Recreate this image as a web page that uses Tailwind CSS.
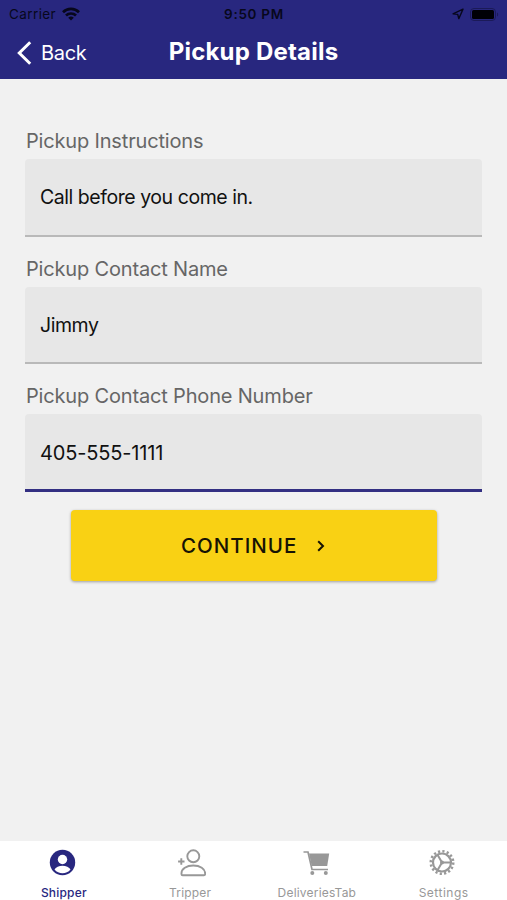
<!DOCTYPE html>
<html lang="en">
<head>
    <meta charset="UTF-8">
    <meta name="viewport" content="width=device-width, initial-scale=1.0">
    <title>Pickup Details</title>
    <script src="https://cdn.jsdelivr.net/npm/@tailwindcss/browser@4"></script>
</head>
<body class="bg-[#f1f1f1] font-['Inter',sans-serif]">
    <div class="flex flex-col w-[507px] h-[900px] overflow-hidden">

        <!-- Header -->
        <header class="h-[79px] bg-[#28277f] shrink-0">
            <div class="h-[27px] grid grid-cols-3 items-center pl-[9px] pr-[8px] text-[#07071c]">
                <div class="flex items-center gap-[6px]">
                    <span class="text-[13.5px] leading-[28px] tracking-[0.4px]">Carrier</span>
                    <svg class="w-[18px] h-[14px]" viewBox="0 0 18 14" fill="none" stroke="currentColor" stroke-width="2.7">
                        <path d="M1 5.2a11.5 11.5 0 0 1 16 0"/>
                        <path d="M4 8.5a7.2 7.2 0 0 1 10 0"/>
                        <path d="M9 13.6L6.2 10.8a4 4 0 0 1 5.6 0z" fill="currentColor" stroke="none"/>
                    </svg>
                </div>
                <span class="text-[13.5px] leading-[28px] font-semibold text-center tracking-[0.7px]">9:50 PM</span>
                <div class="flex items-center justify-end gap-[6px]">
                    <svg class="w-[12px] h-[12px]" viewBox="0 0 12 12" fill="none" stroke="currentColor" stroke-width="1.4" stroke-linejoin="round">
                        <path d="M11 1.200L1 5.800l4.700.6L6.800 10.600z"/>
                    </svg>
                    <svg class="w-[29px] h-[13px]" viewBox="0 0 29 13">
                        <rect x="0.5" y="0.5" width="25" height="12" rx="3.5" fill="none" stroke="#1b1a58"/>
                        <rect x="2" y="2" width="22" height="9" rx="1.5" fill="#000006"/>
                        <path d="M27 4.5c1.6.6 1.6 3.4 0 4z" fill="#1b1a58"/>
                    </svg>
                </div>
            </div>
            <div class="h-[52px] grid grid-cols-[1fr_auto_1fr] items-center text-white">
                <div class="flex items-center gap-[9px] pl-[17px]">
                    <svg class="w-[15px] h-[24px]" viewBox="0 0 15 24" fill="none" stroke="currentColor" stroke-width="3">
                        <path d="M13.2 1.3L2.3 12l10.9 10.7"/>
                    </svg>
                    <span class="text-[20px] leading-[52px] tracking-[-0.3px]">Back</span>
                </div>
                <h1 class="text-[24px] leading-[48px] font-bold pb-[3px] tracking-[0.2px]">Pickup Details</h1>
            </div>
        </header>

        <!-- Pickup form -->
        <main class="flex-1 px-[25px] pt-[47px] text-[20px]">
            <label class="block h-[33px] pl-px leading-[30px] tracking-[-0.17px] text-[#666666]">Pickup Instructions</label>
            <div class="h-[78px] mb-[17px] px-[15px] leading-[76px] text-[19.5px] tracking-[-0.45px] rounded-t-[4px] bg-[#e7e7e7] border-b-2 border-[#b9b9b9] text-[#111111]">Call before you come in.</div>

            <label class="block h-[33px] pl-px leading-[30px] tracking-[-0.17px] text-[#666666]">Pickup Contact Name</label>
            <div class="h-[77px] mb-[17px] px-[15px] leading-[77px] text-[19.5px] tracking-[-0.45px] rounded-t-[4px] bg-[#e7e7e7] border-b-2 border-[#b9b9b9] text-[#111111]">Jimmy</div>

            <label class="block h-[33px] pl-px leading-[30px] tracking-[-0.17px] text-[#666666]">Pickup Contact Phone Number</label>
            <div class="h-[78px] px-[15px] leading-[78px] tracking-[-0.15px] rounded-t-[4px] bg-[#e7e7e7] border-b-3 border-[#332f82] text-[#111111]">405-555-1111</div>

            <button class="flex items-center w-[366px] h-[71px] mt-[18px] ml-[46px] pl-[110px] rounded-[4px] bg-[#f9d114] text-[#161304] shadow-[0_1px_3px_rgba(0,0,0,0.35)]">
                <span class="w-[136px] pt-px text-left text-[20.5px] font-medium tracking-[1px]">CONTINUE</span>
                <svg class="w-[8px] h-[12px]" viewBox="0 0 8 12" fill="none" stroke="currentColor" stroke-width="2">
                    <path d="M1.2 1.2L6 6l-4.8 4.8"/>
                </svg>
            </button>
        </main>

        <!-- Tab bar -->
        <nav class="h-[59px] shrink-0 grid grid-cols-4 bg-white text-[12px] tracking-[0.2px] text-[#989898]">
            <div class="flex flex-col items-center pt-[8px] text-[#28277f]">
                <svg class="w-[28px] h-[28px]" viewBox="0 0 28 28">
                    <circle cx="13.500" cy="13.500" r="12.700" fill="currentColor"/>
                    <circle cx="13.500" cy="10.500" r="4.700" fill="white"/>
                    <path d="M5.500 20.500c1.200-2.500 4.600-3.800 8-3.800s6.800 1.300 8 3.800c-2 2.500-5 3.800-8 3.800s-6-1.300-8-3.800z" fill="white"/>
                </svg>
                <span class="leading-[16px] mt-[8px] pl-px font-medium">Shipper</span>
            </div>
            <div class="flex flex-col items-center pt-[8px]">
                <svg class="w-[28px] h-[28px] ml-[3px]" viewBox="0 0 28 28" fill="none" stroke="currentColor" stroke-width="1.900">
                    <circle cx="15.300" cy="7.300" r="6"/>
                    <path d="M3.500 25.200c-.6-5.400 5.500-8.700 11.800-8.700s12.400 3.300 11.800 8.700c0 .6-.5 1-1.200 1H4.700c-.7 0-1.200-.4-1.200-1z"/>
                    <path d="M3.300 9.300v6.400M0.100 12.500h6.400"/>
                </svg>
                <span class="leading-[16px] mt-[8px]">Tripper</span>
            </div>
            <div class="flex flex-col items-center pt-[8px]">
                <svg class="w-[28px] h-[28px]" viewBox="0 0 28 28" fill="none" stroke="currentColor" stroke-width="1.700">
                    <path d="M.5 3h4.500l4 17.500H25"/>
                    <path d="M6 4.500h20.200l-2 12.500H8.700z" fill="currentColor" stroke="none"/>
                    <circle cx="9.300" cy="24" r="2" fill="currentColor" stroke="none"/>
                    <circle cx="22.800" cy="24" r="2" fill="currentColor" stroke="none"/>
                </svg>
                <span class="leading-[16px] mt-[8px]">DeliveriesTab</span>
            </div>
            <div class="flex flex-col items-center pt-[8px]">
                <svg class="w-[28px] h-[28px] mr-[3px]" viewBox="0 0 28 28" fill="none" stroke="currentColor">
                    <circle cx="14" cy="13.500" r="9" stroke-width="2.200"/>
                    <circle cx="14" cy="13.500" r="11.200" stroke-width="2.600" stroke-dasharray="2.200 2.199"/>
                    <path d="M14 13.500h9M14 13.500l-4.500 -7.800M14 13.500l-4.500 7.800" stroke-width="2"/>
                    <circle cx="14" cy="13.500" r="2" fill="currentColor" stroke="none"/>
                </svg>
                <span class="leading-[16px] mt-[8px] tracking-[0.5px]">Settings</span>
            </div>
        </nav>
    </div>
</body>
</html>
